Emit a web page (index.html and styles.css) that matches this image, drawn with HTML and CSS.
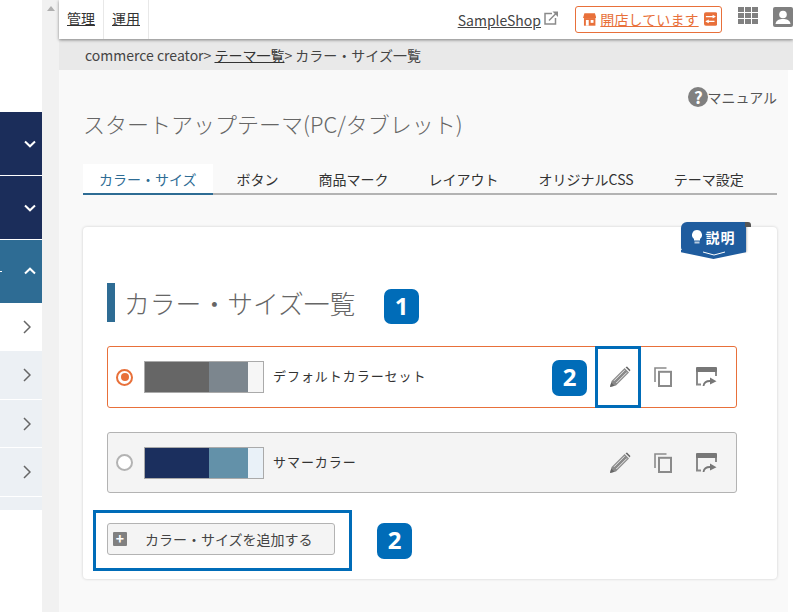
FILE: index.html
```html
<!DOCTYPE html>
<html lang="ja">
<head>
<meta charset="utf-8">
<title>カラー・サイズ一覧</title>
<link rel="stylesheet" href="styles.css">
</head>
<body>
<svg class="defs" width="0" height="0" aria-hidden="true">
  <symbol id="chev" viewBox="0 0 12 8"><path d="M1 1.5 6 6.3 11 1.5" fill="none" stroke="currentColor" stroke-width="2"/></symbol>
  <symbol id="chevr" viewBox="0 0 8 14"><path d="M1 1 7 7 1 13" fill="none" stroke="currentColor" stroke-width="1.5"/></symbol>
  <symbol id="pencil" viewBox="0 0 22 22"><path d="M1 21 2.6 15 15.6 2 20 6.4 7 19.4Z" fill="#8a8a8a"/><path d="M5 14.8 15.6 4.2M7.3 17 17.9 6.4" stroke="#f4f4f4" stroke-width=".9" fill="none"/><path d="M1 21 2.2 16.4 5.6 19.8Z" fill="#666"/><path d="M16.5 1.2 18 .6 21.4 4 20.8 5.5Z" fill="#666"/></symbol>
  <symbol id="copy" viewBox="0 0 18 20"><path d="M12.5 1H1v14" fill="none" stroke="#8a8a8a" stroke-width="1.6"/><rect x="5" y="4.8" width="12" height="14.2" fill="none" stroke="#8a8a8a" stroke-width="2"/></symbol>
  <symbol id="win" viewBox="0 0 21 20"><path d="M1 4v13.500h4M20 4v5" fill="none" stroke="#8a8a8a" stroke-width="2"/><rect x="0" y="0" width="21" height="5" rx="1" fill="#777"/><path d="M7.500 19c.4-3 2.500-5 6.500-5" fill="none" stroke="#777" stroke-width="1.800"/><path d="M14 10.500 20.500 14.200 14 17.500Z" fill="#777"/></symbol>
</svg>
<div class="app">
  <aside class="side">
    <div class="side-top"></div>
    <div class="side-item dark"><svg class="chev"><use href="#chev"/></svg></div>
    <div class="side-item dark"><svg class="chev"><use href="#chev"/></svg></div>
    <div class="side-item teal"><i class="clip"></i><svg class="chev up"><use href="#chev"/></svg></div>
    <div class="sub white"><svg class="chevr"><use href="#chevr"/></svg></div>
    <div class="sub tall"><svg class="chevr"><use href="#chevr"/></svg></div>
    <div class="sub"><svg class="chevr"><use href="#chevr"/></svg></div>
    <div class="sub tall"><svg class="chevr"><use href="#chevr"/></svg></div>
    <div class="sub-end"></div>
  </aside>
  <div class="gutter"><i class="arrow"></i></div>
  <div class="body">
    <header class="top">
      <nav class="nav"><a class="nav-a">管理</a><a class="nav-a">運用</a></nav>
      <div class="top-right">
        <a class="shop">SampleShop</a>
        <svg class="ext" viewBox="0 0 14 14"><path d="M8 2.500H1V13H11.500V7" fill="none" stroke="#8a8a8a" stroke-width="1.500"/><path d="M5 9.500 12 2.500" stroke="#8a8a8a" stroke-width="1.500"/><path d="M8.500 .5H14V6Z" fill="#8a8a8a"/></svg>
        <div class="open">
          <svg class="store" viewBox="0 0 14 13"><path d="M1.500 0H12.500L14 5H0Z" fill="#e8703a"/><rect x="1" y="5" width="12" height="8" fill="#e8703a"/><rect x="3" y="7" width="3" height="6" fill="#fff"/><rect x="8" y="7" width="3" height="3" fill="#fff"/></svg>
          <a class="open-a">開店しています</a>
          <svg class="swap" viewBox="0 0 14 14"><rect width="14" height="14" rx="2" fill="#e8703a"/><path d="M2 4.500H11M2 9.500H11" stroke="#fff" stroke-width="1.400"/><path d="M9 2.500 12.500 4.500 9 6.500ZM5 7.500 1.500 9.500 5 11.500Z" fill="#fff"/></svg>
        </div>
        <div class="apps"><i></i><i></i><i></i><i></i><i></i><i></i><i></i><i></i><i></i></div>
        <svg class="user" viewBox="0 0 20 20"><rect width="20" height="20" rx="2" fill="#808080"/><circle cx="10" cy="7.500" r="3.800" fill="#fff"/><path d="M2.500 17c.5-4 4-5 7.500-5s7 1 7.500 5Z" fill="#fff"/></svg>
      </div>
    </header>
    <div class="crumb">commerce creator&gt; <a>テーマ一覧</a>&gt; カラー・サイズ一覧</div>
    <main class="main">
      <div class="manual"><span class="q">?</span>マニュアル</div>
      <h1 class="title">スタートアップテーマ(PC/タブレット)</h1>
      <div class="tabs">
        <span class="tab on">カラー・サイズ</span>
        <span class="tab">ボタン</span>
        <span class="tab">商品マーク</span>
        <span class="tab">レイアウト</span>
        <span class="tab">オリジナルCSS</span>
        <span class="tab">テーマ設定</span>
      </div>
      <section class="card">
        <div class="explain">
          <i class="fold"></i>
          <svg class="bulb" viewBox="0 0 10 14"><path d="M5 0a5 5 0 0 1 3 9v1.500H2V9a5 5 0 0 1 3-9Z" fill="#fff"/><rect x="2.500" y="11.500" width="5" height="2" fill="#b8cbe0"/></svg>説明
          <svg class="ex-ch" viewBox="0 0 24 5"><path d="M1 1 12 4 23 1" fill="none" stroke="#fff" stroke-width="1"/></svg>
        </div>
        <div class="head">
          <h2 class="h2">カラー・サイズ一覧</h2>
          <span class="badge b1">1</span>
        </div>
        <div class="row sel">
          <i class="radio on"></i>
          <div class="sw"><i class="s1 c-grey1"></i><i class="s2 c-grey2"></i><i class="s3 c-grey3"></i></div>
          <span class="name">デフォルトカラーセット</span>
          <div class="acts">
            <span class="badge b2">2</span>
            <span class="hl-pen"></span>
            <svg class="i-pen"><use href="#pencil"/></svg>
            <svg class="i-copy"><use href="#copy"/></svg>
            <svg class="i-win"><use href="#win"/></svg>
          </div>
        </div>
        <div class="row">
          <i class="radio"></i>
          <div class="sw"><i class="s1 c-navy"></i><i class="s2 c-teal"></i><i class="s3 c-ice"></i></div>
          <span class="name">サマーカラー</span>
          <div class="acts">
            <svg class="i-pen"><use href="#pencil"/></svg>
            <svg class="i-copy"><use href="#copy"/></svg>
            <svg class="i-win"><use href="#win"/></svg>
          </div>
        </div>
        <div class="add-wrap">
          <button class="add"><i class="plus">+</i>カラー・サイズを追加する</button>
          <span class="hl-add"></span>
          <span class="badge b3">2</span>
        </div>
      </section>
    </main>
  </div>
</div>
</body>
</html>
```
FILE: styles.css
```css
* { box-sizing: border-box; }
html, body { margin: 0; height: 612px; overflow: hidden; background: #fff; }
body { font-family: "Noto Sans CJK JP", "Noto Sans", sans-serif; color: #333; font-size: 14px; }
.defs { position: absolute; }
i { display: block; font-style: normal; }
.app { display: flex; width: 793px; height: 612px; overflow: hidden; }

.side { width: 42px; flex: none; display: flex; flex-direction: column; }
.side-top { height: 112px; }
.side-item { height: 64px; display: flex; align-items: center; justify-content: flex-end; padding: 0 6px 0 0; color: #fff; border-bottom: 1px solid #fff; }
.dark { background: #1b2d5a; }
.teal { background: #2e6c94; justify-content: space-between; border-bottom: 0; height: 63px; }
.clip { width: 2px; height: 1px; background: #fff; }
.chev { width: 12px; height: 8px; }
.up { transform: scaleY(-1); margin-top: -2px; }
.sub { height: 48px; background: #ecf0f4; color: #666; border-bottom: 1px solid #fff; display: flex; align-items: center; justify-content: flex-end; padding-right: 11px; }
.sub.tall { height: 49px; }
.sub.white { background: #fff; border-bottom: 0; }
.sub-end { height: 13px; background: #ecf0f4; }
.chevr { width: 8px; height: 14px; }

.gutter { width: 17px; flex: none; background: #f1f1f1; padding: 6px 0 0 5px; }
.arrow { width: 0; height: 0; border: 4px solid transparent; border-top: 0; border-bottom: 5px solid #b0b0b0; }

.body { flex: 1; min-width: 0; display: flex; flex-direction: column; }
.top { height: 39px; flex: none; background: #fff; box-shadow: 0 1px 3px rgba(0,0,0,.45); position: relative; z-index: 2; display: flex; justify-content: space-between; }
.nav { display: flex; }
.nav-a { width: 45px; height: 39px; border-right: 1px solid #e8e8e8; font-size: 14px; text-decoration: underline; text-align: center; line-height: 36px; color: #333; }
.top-right { display: flex; align-items: center; }
.shop { font-size: 14px; text-decoration: underline; color: #444; }
.ext { width: 14px; height: 14px; margin: -4px 0 0 3px; }
.open { width: 147px; height: 27px; margin: -1px 0 0 17px; border: 1px solid #e8703a; border-radius: 3px; display: flex; align-items: center; padding: 0 4px 0 7px; color: #e8703a; }
.store { width: 14px; height: 13px; }
.open-a { font-size: 14px; text-decoration: underline; margin-left: 4px; white-space: nowrap; letter-spacing: .1px; }
.swap { width: 14px; height: 14px; margin-left: 5px; }
.apps { width: 20px; height: 17px; margin: -8px 0 0 16px; display: grid; grid-template-columns: repeat(3, 6px); grid-auto-rows: 5px; gap: 1px; }
.apps i { background: #808080; }
.user { width: 20px; height: 20px; flex: none; margin: -6px 0 0 15px; }

.crumb { height: 31px; flex: none; background: #e9e9e9; padding: 0 0 0 26px; font-size: 14px; line-height: 32px; color: #444; white-space: nowrap; }
.crumb a { text-decoration: underline; color: #333; }

.main { flex: 1; width: 729px; background: #f9f9f9; padding: 16px 11px 0 24px; display: flex; flex-direction: column; }
.manual { align-self: flex-end; height: 22px; display: flex; align-items: center; font-size: 14px; color: #555; }
.q { width: 20px; height: 20px; border-radius: 50%; background: #808080; color: #fff; font-weight: 700; font-size: 17px; line-height: 20px; text-align: center; margin-right: -1px; }
.title { margin: 0; font-weight: 300; font-size: 22px; line-height: 32px; height: 32px; margin-top: -1px; margin-bottom: 1px; color: #666; white-space: nowrap; }
.tabs { margin-top: 24px; height: 31px; border-bottom: 2px solid #b3b3b3; display: flex; white-space: nowrap; }
.tab { height: 31px; padding: 0 20px; font-size: 14px; line-height: 30px; color: #333; }
.tab.on { padding: 0 16px; margin-right: 4px; background: #fff; color: #2e6c94; border-bottom: 2px solid #2e6c94; }

.card { position: relative; margin-top: 32px; width: 694px; height: 352px; background: #fff; border-radius: 4px; box-shadow: 0 0 3px rgba(0,0,0,.18); padding: 56px 40px 0 24px; }
.explain { position: absolute; top: -5px; left: 598px; width: 65px; height: 29px; background: #1f5c9e; color: #fff; border-radius: 6px 0 0 4px; font-weight: 700; font-size: 14px; letter-spacing: 1px; display: flex; align-items: center; justify-content: center; padding: 1px 0 0; box-shadow: 1px 1px 2px rgba(0,0,0,.25); }
.explain::after { content: ""; position: absolute; left: 0; right: 0; top: 28px; height: 9px; background: #1f5c9e; clip-path: polygon(0 0, 100% 0, 100% 25%, 50% 100%, 0 25%); }
.fold { position: absolute; right: -5px; top: 0; width: 6px; height: 5px; background: #555; border-radius: 0 3px 0 0; }
.bulb { width: 10px; height: 14px; margin-right: 4px; }
.ex-ch { position: absolute; left: 21px; top: 29px; width: 24px; height: 5px; z-index: 1; }

.head { height: 39px; display: flex; align-items: center; border-left: 8px solid #2e6c94; padding-left: 9px; position: relative; }
.h2 { margin: 0; font-weight: 300; font-size: 25.800px; color: #666; white-space: nowrap; }
.badge { width: 35px; height: 35px; border-radius: 7px; background: #006cb8; color: #fff; font-weight: 700; font-size: 24px; line-height: 33px; text-align: center; font-family: "Noto Sans", sans-serif; position: absolute; }
.b1 { left: 269px; top: 6px; }

.row { margin-top: 24px; width: 630px; height: 61px; border: 1px solid #b3b3b3; border-radius: 3px; background: #f4f4f4; display: flex; align-items: center; padding-left: 8px; position: relative; }
.row.sel { background: #fff; border-color: #e8703a; height: 62px; }
.radio { width: 17px; height: 17px; border-radius: 50%; border: 2.500px solid #b3b3b3; background: #fff; flex: none; }
.radio.on { border-color: #e8703a; display: flex; align-items: center; justify-content: center; }
.radio.on::after { content: ""; width: 8px; height: 8px; border-radius: 50%; background: #e8703a; }
.sw { width: 120px; height: 32px; margin-left: 11px; border: 1px solid #aaa; display: flex; flex: none; }
.s1 { width: 64px; } .s2 { width: 39px; } .s3 { flex: 1; }
.c-grey1 { background: #666; } .c-grey2 { background: #7c868e; } .c-grey3 { background: #f6f6f6; }
.c-navy { background: #1b2f5e; } .c-teal { background: #6391a9; } .c-ice { background: #e9f1f8; }
.name { margin: -3px 0 0 9px; font-size: 13px; letter-spacing: .95px; color: #333; white-space: nowrap; }
.acts { margin-left: auto; display: flex; align-items: center; padding-right: 19px; }
.i-pen { width: 22px; height: 22px; }
.i-copy { width: 18px; height: 20px; margin-left: 23px; }
.i-win { width: 21px; height: 20px; margin-left: 24px; }
.b2 { left: 444px; top: 13px; height: 36px; }
.hl-pen { position: absolute; left: 487px; top: -1px; width: 46px; height: 62px; border: 3px solid #006cb8; }

.add-wrap { margin-top: 30px; position: relative; }
.add { width: 228px; height: 32px; padding: 0 0 0 5px; border: 1px solid #b3b3b3; border-radius: 3px; background: #f4f4f4; display: flex; align-items: center; font: inherit; font-size: 14px; color: #444; }
.plus { width: 14px; height: 14px; border-radius: 1px; background: #808080; color: #fff; font-weight: 700; font-size: 14px; line-height: 13px; text-align: center; margin-right: 18px; }
.hl-add { position: absolute; left: -14px; top: -13px; width: 259px; height: 61px; border: 3px solid #006cb8; }
.b3 { left: 270px; top: 0; height: 36px; }
```
